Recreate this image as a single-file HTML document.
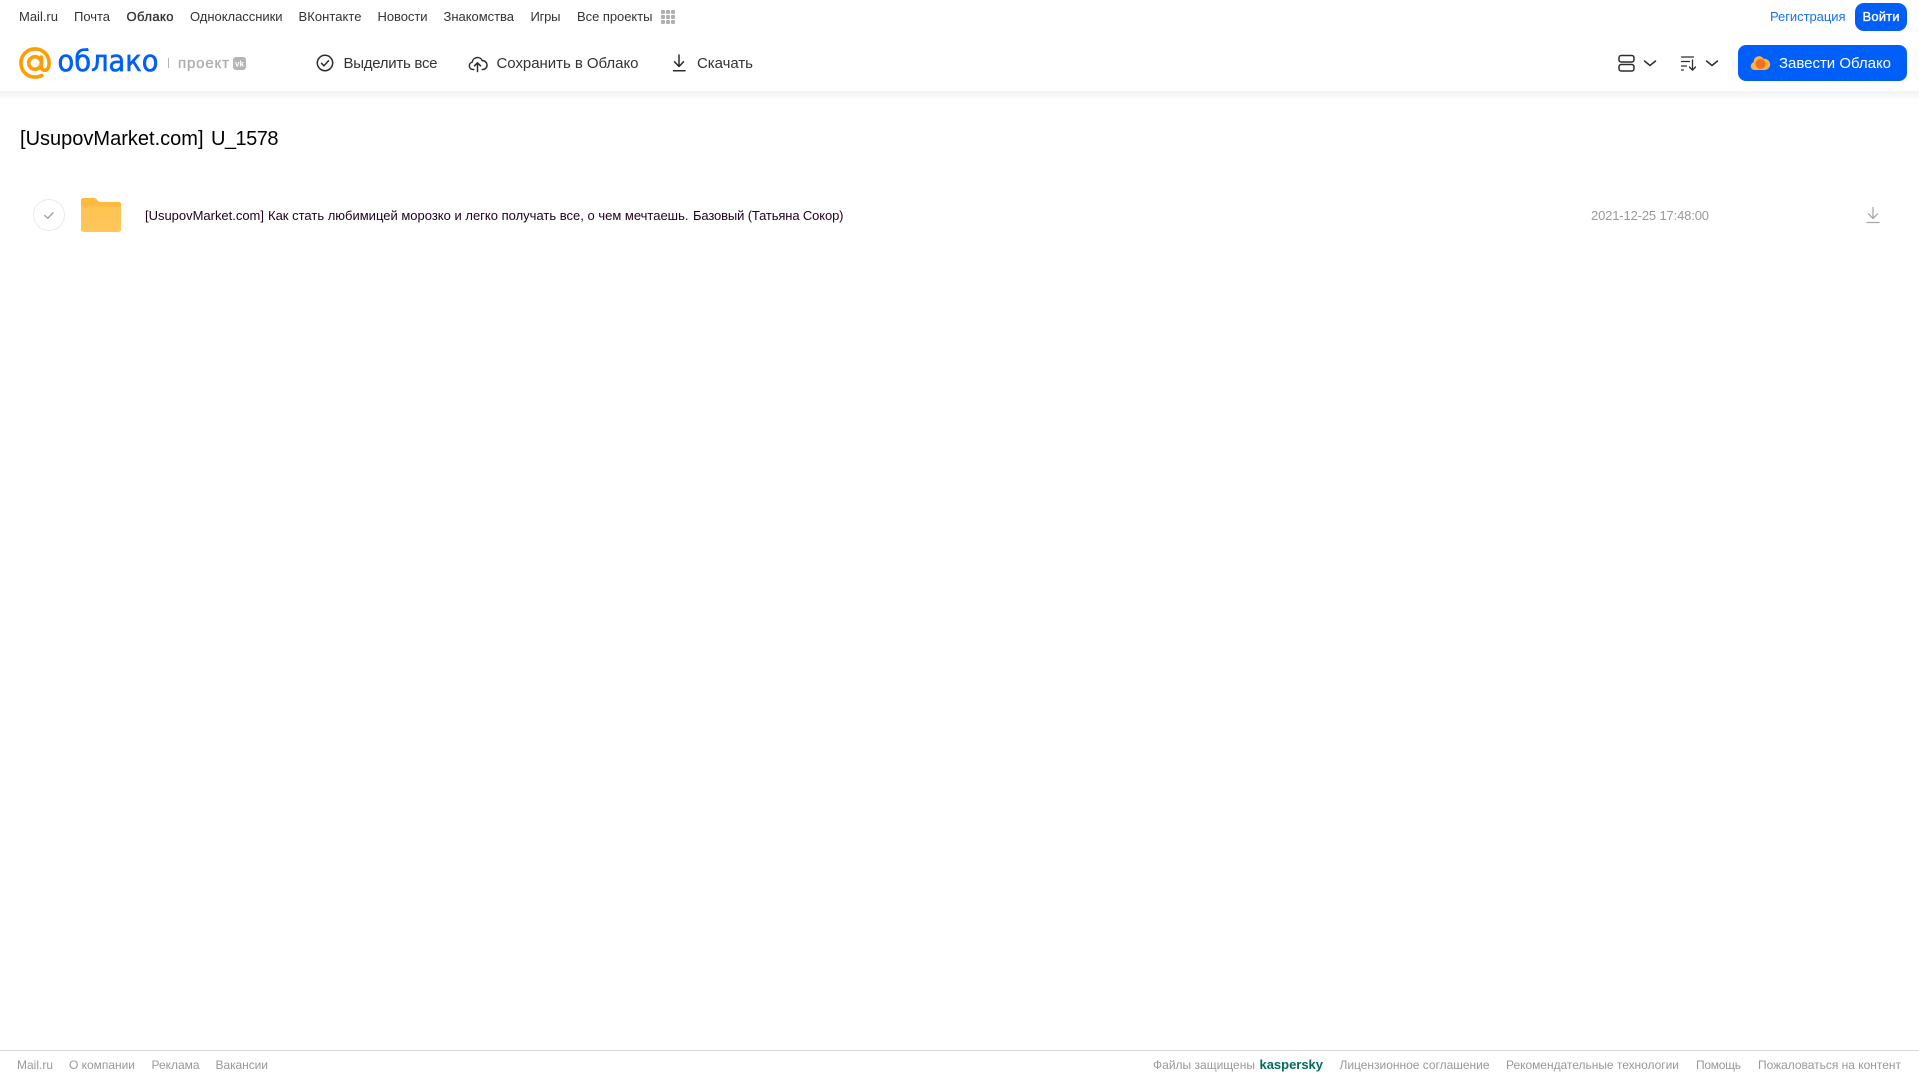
<!DOCTYPE html>
<html lang="ru">
<head>
<meta charset="utf-8">
<title>[UsupovMarket.com] U_1578</title>
<style>
html,body{margin:0;padding:0;background:#fff;width:1919px;height:1079px;overflow:hidden}
svg{display:block;position:absolute;left:0;top:0}
text{font-family:"Liberation Sans","Noto Sans CJK SC",sans-serif;white-space:pre}
.n{font-size:13px;fill:#333}
.t{font-size:15px;fill:#333}
.f{font-size:12px;fill:#999}
.k{fill:none;stroke:#2c2d2e;stroke-width:1.5;stroke-linecap:round;stroke-linejoin:round}
</style>
</head>
<body>
<svg width="1919" height="1079" viewBox="0 0 1919 1079" xmlns="http://www.w3.org/2000/svg">
<defs>
<linearGradient id="sh" x1="0" y1="0" x2="0" y2="1"><stop offset="0" stop-color="#f3f3f3"/><stop offset="1" stop-color="#fff"/></linearGradient>
<linearGradient id="fo" x1="0" y1="0" x2="0" y2="1"><stop offset="0" stop-color="#ffc24d"/><stop offset="1" stop-color="#ffc65c"/></linearGradient>
</defs>
<rect x="0" y="91" width="1919" height="10" fill="url(#sh)"/>

<!-- top nav -->
<text class="n" x="19" y="21" textLength="39" lengthAdjust="spacing">Mail.ru</text>
<text class="n" x="74" y="21" textLength="36" lengthAdjust="spacing">Почта</text>
<text class="n" x="126.500" y="21" textLength="47" lengthAdjust="spacing" style="stroke:#333;stroke-width:.35">Облако</text>
<text class="n" x="190" y="21" textLength="92.500" lengthAdjust="spacing">Одноклассники</text>
<text class="n" x="298.500" y="21" textLength="63" lengthAdjust="spacing">ВКонтакте</text>
<text class="n" x="377.500" y="21" textLength="50" lengthAdjust="spacing">Новости</text>
<text class="n" x="443.500" y="21" textLength="70.500" lengthAdjust="spacing">Знакомства</text>
<text class="n" x="530.500" y="21" textLength="30" lengthAdjust="spacing">Игры</text>
<text class="n" x="577" y="21" textLength="75.500" lengthAdjust="spacing">Все проекты</text>
<g fill="#b0b0b0">
<rect x="661" y="10" width="4" height="4" rx="1"/><rect x="666" y="10" width="4" height="4" rx="1"/><rect x="671" y="10" width="4" height="4" rx="1"/>
<rect x="661" y="15" width="4" height="4" rx="1"/><rect x="666" y="15" width="4" height="4" rx="1"/><rect x="671" y="15" width="4" height="4" rx="1"/>
<rect x="661" y="20" width="4" height="4" rx="1"/><rect x="666" y="20" width="4" height="4" rx="1"/><rect x="671" y="20" width="4" height="4" rx="1"/>
</g>
<text x="1770" y="21" textLength="75.500" lengthAdjust="spacing" style="font-size:13px;fill:#1a6ff0">Регистрация</text>
<rect x="1855" y="3" width="52" height="28" rx="9" fill="#005ff9"/>
<text x="1862.500" y="21" textLength="37" lengthAdjust="spacing" style="font-size:13px;fill:#fff;stroke:#fff;stroke-width:.35">Войти</text>

<!-- logo -->
<path d="M41.300 57v9.500c0 2.400 1.600 3.800 3.500 3.800 2.900 0 4.300-3 4.300-7.300 0-8-6.300-14.100-14.100-14.100s-14.100 6.300-14.100 14.100 6.300 14.100 14.100 14.100c2.500 0 4.600-.5 6.800-1.600" fill="none" stroke="#ff9e00" stroke-width="3.600" stroke-linecap="round"/>
<circle cx="35" cy="63" r="6.300" fill="none" stroke="#ff9e00" stroke-width="3.600"/>
<text x="57.500" y="71" textLength="101" lengthAdjust="spacingAndGlyphs" style="font-family:'DejaVu Sans',sans-serif;font-size:29px;fill:#005ff9;stroke:#005ff9;stroke-width:.6">облако</text>
<rect x="168" y="58" width="1" height="10" fill="#b5b5b5"/>
<text x="178" y="68" textLength="51" lengthAdjust="spacing" style="font-size:15px;fill:#adadad;stroke:#adadad;stroke-width:.35">проект</text>
<rect x="233" y="57" width="13" height="13" rx="3" fill="#b5b5b5"/>
<text x="235" y="66.500" textLength="9" lengthAdjust="spacingAndGlyphs" style="font-size:8px;font-weight:700;fill:#fff">vk</text>

<!-- toolbar -->
<circle cx="325" cy="63" r="7.700" class="k"/>
<path d="M321.500 63.300l2.500 2.500 4.500-5" class="k"/>
<text class="t" x="343.500" y="68" textLength="94" lengthAdjust="spacing">Выделить все</text>
<path d="M473.800 69.500h-.8a3.700 3.700 0 0 1-.8-7.300 5.300 5.300 0 0 1 10.100-1.500 4.400 4.400 0 0 1 .7 8.800h-.8" class="k"/>
<path d="M477.500 71.500v-8.500M474.500 65.800l3-3 3 3" class="k"/>
<text class="t" x="496.500" y="68" textLength="142" lengthAdjust="spacing">Сохранить в Облако</text>
<path d="M679 55v11.500M674.500 61.800l4.500 4.700 4.500-4.700" class="k"/>
<path d="M673.500 70.700h11.500" class="k"/>
<text class="t" x="697" y="68" textLength="56" lengthAdjust="spacing">Скачать</text>

<!-- right tools -->
<rect x="1619" y="55.500" width="15" height="6.500" rx="2.200" class="k"/>
<rect x="1619" y="64.500" width="15" height="6.500" rx="2.200" class="k"/>
<path d="M1644.500 61l5.500 4.500 5.500-4.500" class="k"/>
<path d="M1681.500 57h12M1681.500 61.500h8M1681.500 66h5M1681.500 70h2" class="k" style="stroke-width:1.200"/>
<path d="M1692.500 60v10M1689.500 67l3 3.200 3-3.200" class="k" style="stroke-width:1.300"/>
<path d="M1706.500 61l5.500 4.500 5.500-4.500" class="k"/>
<rect x="1738" y="45" width="169" height="36" rx="8" fill="#005ff9"/>
<path d="M1754.500 70a3.900 3.900 0 0 1-.8-7.700 5.300 5.300 0 0 1 5.300-6c2.300 0 3.600 1 4.500 2.600a5.600 5.600 0 0 1 2 11.100z" fill="#ffb23f"/>
<circle cx="1760.500" cy="64" r="5" fill="#f2701f"/>
<text x="1779" y="68" textLength="112" lengthAdjust="spacing" style="font-size:15px;fill:#fff">Завести Облако</text>

<!-- title -->
<text x="20" y="145" textLength="183.500" lengthAdjust="spacing" style="font-size:20px;fill:#000">[UsupovMarket.com]</text>
<text x="211" y="145" textLength="67.500" lengthAdjust="spacing" style="font-size:20px;fill:#000">U_1578</text>

<!-- row -->
<circle cx="49" cy="215" r="15.500" fill="#fff" stroke="#ececec" stroke-width="1"/>
<path d="M44.800 215.500l3 2.800 5.200-5.500" fill="none" stroke="#999" stroke-width="1.300" stroke-linecap="round" stroke-linejoin="round"/>
<path d="M81 200.500a2.500 2.500 0 0 1 2.500-2.500h9.500c2.500 0 3.300 1 4.300 2.200.9 1 1.500 1.800 3.200 1.800h18a2.500 2.500 0 0 1 2.500 2.500v25a2.500 2.500 0 0 1-2.500 2.500h-35a2.500 2.500 0 0 1-2.500-2.500z" fill="url(#fo)"/>
<path d="M81 206.500h40v-2a2.500 2.500 0 0 0-2.500-2.500h-18c-1.700 0-2.300-.8-3.200-1.800-1-1.200-1.800-2.200-4.300-2.200h-9.500a2.500 2.500 0 0 0-2.500 2.500z" fill="#ffb93f"/>
<text x="145" y="220" textLength="119" lengthAdjust="spacing" style="font-size:13px;fill:#200020">[UsupovMarket.com]</text>
<text x="268" y="220" textLength="420.500" lengthAdjust="spacing" style="font-size:13px;fill:#200020">Как стать любимицей морозко и легко получать все, о чем мечтаешь.</text>
<text x="693" y="220" textLength="150.500" lengthAdjust="spacing" style="font-size:13px;fill:#200020">Базовый (Татьяна Сокор)</text>
<text x="1591" y="220" textLength="118" lengthAdjust="spacing" style="font-size:13px;fill:#999">2021-12-25 17:48:00</text>
<path d="M1873 207.500v11M1868.500 213.800l4.500 4.700 4.500-4.700" fill="none" stroke="#a8a8a8" stroke-width="1.300" stroke-linecap="round" stroke-linejoin="round"/>
<path d="M1867 222.500h12" fill="none" stroke="#a8a8a8" stroke-width="1.300" stroke-linecap="round"/>

<!-- footer -->
<rect x="0" y="1050" width="1919" height="1" fill="#d9d9d9"/>
<text class="f" x="17" y="1069" textLength="36" lengthAdjust="spacing">Mail.ru</text>
<text class="f" x="69" y="1069" textLength="66" lengthAdjust="spacing">О компании</text>
<text class="f" x="151.500" y="1069" textLength="48" lengthAdjust="spacing">Реклама</text>
<text class="f" x="215.500" y="1069" textLength="52.500" lengthAdjust="spacing">Вакансии</text>
<text class="f" x="1153" y="1069" textLength="102" lengthAdjust="spacing">Файлы защищены</text>
<text x="1259.500" y="1069" textLength="63.500" lengthAdjust="spacing" style="font-size:13px;font-weight:700;fill:#006d5c">kaspersky</text>
<text class="f" x="1339.500" y="1069" textLength="150" lengthAdjust="spacing">Лицензионное соглашение</text>
<text class="f" x="1506" y="1069" textLength="173" lengthAdjust="spacing">Рекомендательные технологии</text>
<text class="f" x="1696" y="1069" textLength="45" lengthAdjust="spacing">Помощь</text>
<text class="f" x="1758" y="1069" textLength="143" lengthAdjust="spacing">Пожаловаться на контент</text>
</svg>
</body>
</html>
